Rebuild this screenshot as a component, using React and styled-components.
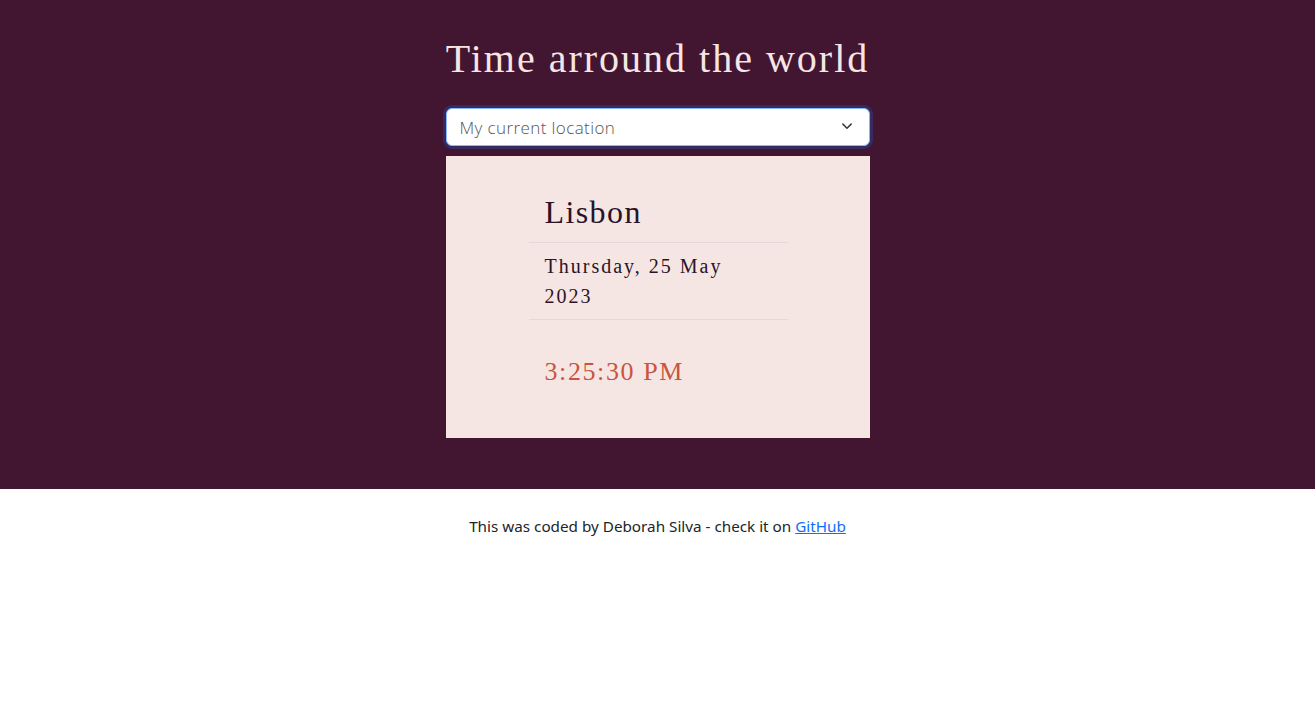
import styled, { createGlobalStyle } from "styled-components";

const GlobalStyle = createGlobalStyle`
  * { box-sizing: border-box; }
  body {
    margin: 0;
    background: #fff;
    font-family: "Noto Sans", "Open Sans", sans-serif;
  }
`;

const Hero = styled.section`
  background-color: #421531;
  height: 489px;
  padding-top: 35px;
  display: flex;
  flex-direction: column;
  align-items: center;
`;

const Inner = styled.div`
  width: 424px;
  display: flex;
  flex-direction: column;
`;

const Title = styled.h1`
  margin: 0 0 25px;
  text-align: center;
  font-family: "Liberation Serif", "Times New Roman", serif;
  font-weight: 400;
  font-size: 40px;
  line-height: 48px;
  letter-spacing: 2px;
  color: #f5e6e4;
`;

const Select = styled.div`
  height: 38px;
  background: #fff;
  border: 1px solid #86b7fe;
  border-radius: 6px;
  box-shadow: 0 0 0 3px rgba(13, 110, 253, 0.25);
  display: flex;
  align-items: center;
  justify-content: space-between;
  padding: 0 14px 0 13px;
  font-family: "Open Sans", "Lato", sans-serif;
  font-weight: 300;
  font-size: 17px;
  letter-spacing: 0.4px;
  color: #555;
`;

const Card = styled.div`
  margin-top: 10px;
  background-color: #f5e6e4;
  padding: 32px 82px 32px 83px;
  height: 282px;
`;

const List = styled.ul`
  list-style: none;
  margin: 0;
  padding: 0;
`;

const Item = styled.li`
  padding: ${(p) => p.pad || "8px 16px"};
  border-bottom: ${(p) => (p.last ? "none" : "1px solid #e3d9d9")};
  font-family: "Liberation Serif", "Times New Roman", serif;
  font-size: ${(p) => p.size};
  line-height: ${(p) => p.lh};
  letter-spacing: ${(p) => p.ls};
  color: ${(p) => p.color || "#2b1326"};
`;

const Footer = styled.footer`
  padding-top: 25px;
  text-align: center;
  font-size: 15.25px;
  line-height: 24px;
  color: #212529;

  a {
    color: #0d6efd;
  }
`;

const Chevron = () => (
  <svg width="16" height="16" viewBox="0 0 16 16" fill="none">
    <path d="M2.5 5.5l5.5 5.5 5.5-5.5" stroke="#343a40" strokeWidth="2" strokeLinecap="round" strokeLinejoin="round" transform="translate(2 1) scale(0.75)" />
  </svg>
);

export default function App() {
  return (
    <>
      <GlobalStyle />
      <Hero>
        <Inner>
          <Title>Time arround the world</Title>
          <Select>
            <span>My current location</span>
            <Chevron />
          </Select>
          <Card>
            <List>
              <Item size="32px" lh="38px" ls="1.4px" pad="5px 16px 11px">Lisbon</Item>
              <Item size="20px" lh="30px" ls="2px">Thursday, 25 May 2023</Item>
              <Item last size="26px" lh="31px" ls="1.6px" color="#c8553d" pad="36px 16px 18px">
                3:25:30 PM
              </Item>
            </List>
          </Card>
        </Inner>
      </Hero>
      <Footer>
        This was coded by Deborah Silva - check it on <a href="#">GitHub</a>
      </Footer>
    </>
  );
}
